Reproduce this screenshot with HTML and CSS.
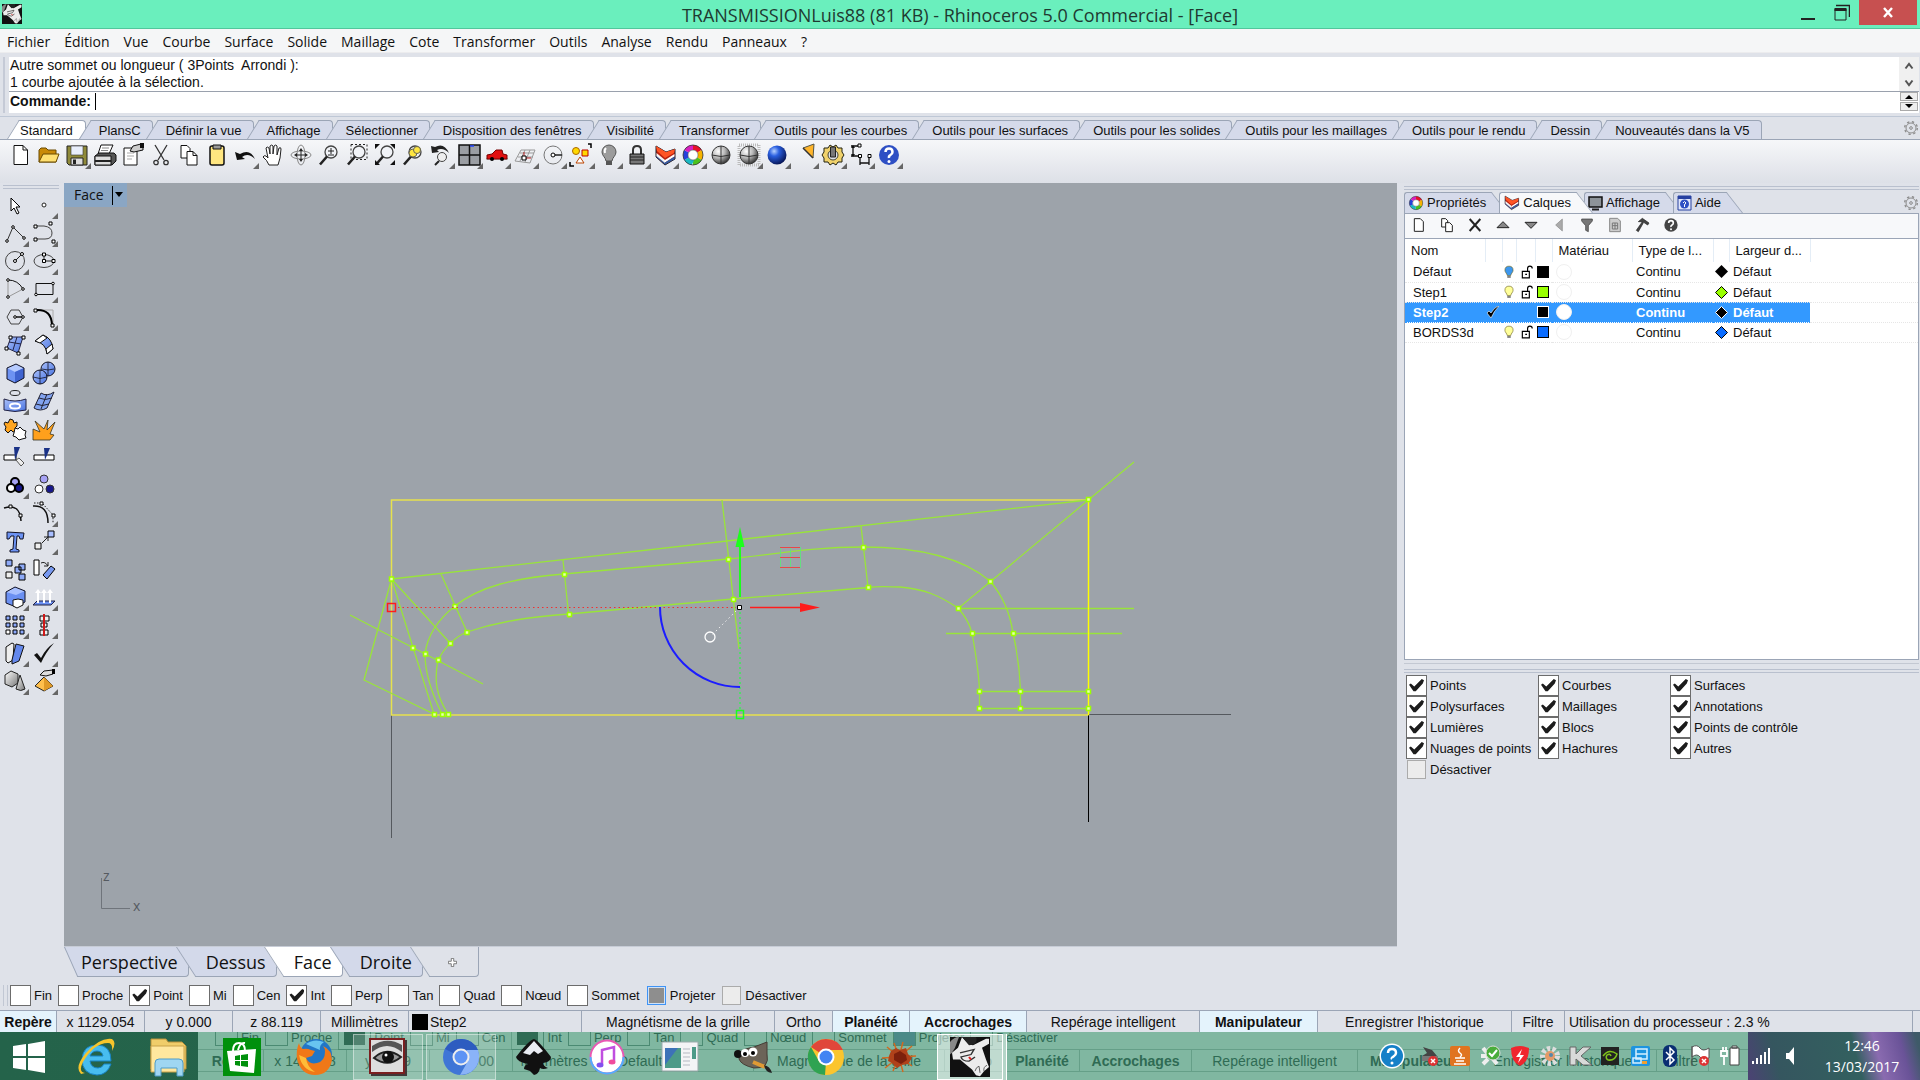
FILE: index.html
```html
<!DOCTYPE html>
<html lang="fr">
<head>
<meta charset="utf-8">
<title>TRANSMISSIONLuis88 (81 KB) - Rhinoceros 5.0 Commercial - [Face]</title>
<link rel="stylesheet" href="styles.css">
</head>
<body>
<svg class="defs" width="0" height="0" aria-hidden="true">
  <defs>
    <linearGradient id="blue" x1="0" y1="0" x2="1" y2="1"><stop offset="0" stop-color="#a9c0fb"/><stop offset="1" stop-color="#4a74e0"/></linearGradient>
    <linearGradient id="grey" x1="0" y1="0" x2="1" y2="1"><stop offset="0" stop-color="#fff"/><stop offset="1" stop-color="#777"/></linearGradient>
    <radialGradient id="ball" cx=".35" cy=".3" r=".75"><stop offset="0" stop-color="#fff"/><stop offset=".5" stop-color="#b5b5b5"/><stop offset="1" stop-color="#2c2c2c"/></radialGradient>
    <radialGradient id="blueball" cx=".35" cy=".3" r=".75"><stop offset="0" stop-color="#b8d2ff"/><stop offset=".35" stop-color="#2a5fe0"/><stop offset="1" stop-color="#04114f"/></radialGradient>
    <symbol id="doc" viewBox="0 0 24 24"><path d="M5 2.500h9l4.500 4.500v14.500H5z" fill="#fff" stroke="#111"/><path d="M14 2.500V7h4.500" fill="none" stroke="#111"/></symbol>
    <symbol id="copy" viewBox="0 0 24 24"><path d="M4 2.500h6l3 3V15H4z" fill="#fff" stroke="#111"/><path d="M10 8.500h6l4 4V22H10z" fill="#fff" stroke="#111"/><path d="M16 8.500v4h4" fill="none" stroke="#111"/></symbol>
    <symbol id="lens" viewBox="0 0 24 24"><circle cx="14" cy="9" r="6" fill="#f1f3f7" stroke="#444" stroke-width="1.300"/><path d="M10 13.500L3 21.500" stroke="#222" stroke-width="2.600"/></symbol>
    <symbol id="wheel" viewBox="0 0 24 24"><g fill="none" stroke-width="5" transform="rotate(-90 12 12)"><circle cx="12" cy="12" r="7.500" pathLength="6" stroke="#e8102a" stroke-dasharray="1 5"/><circle cx="12" cy="12" r="7.500" pathLength="6" stroke="#f6b400" stroke-dasharray="1 5" stroke-dashoffset="-1"/><circle cx="12" cy="12" r="7.500" pathLength="6" stroke="#4cc21c" stroke-dasharray="1 5" stroke-dashoffset="-2"/><circle cx="12" cy="12" r="7.500" pathLength="6" stroke="#19b9c4" stroke-dasharray="1 5" stroke-dashoffset="-3"/><circle cx="12" cy="12" r="7.500" pathLength="6" stroke="#2540dc" stroke-dasharray="1 5" stroke-dashoffset="-4"/><circle cx="12" cy="12" r="7.500" pathLength="6" stroke="#d81fc0" stroke-dasharray="1 5" stroke-dashoffset="-5"/></g><circle cx="12" cy="12" r="10" fill="none" stroke="#333" stroke-width=".8"/><circle cx="12" cy="12" r="5" fill="#fff" stroke="#555" stroke-width=".6"/></symbol>
    <symbol id="layers" viewBox="0 0 24 24"><path d="M3 3l10 6 9-3v10l-10 6-9-8z" fill="#b9220f" stroke="#1c2233"/><path d="M3 3l10 6 9-3-1 4-9 5L4 8z" fill="#ff5424"/><path d="M12 17l9.500-6v2.500L12 19.500z" fill="#fff"/><path d="M12 19.500l9.500-6v2.500L12 21.500 3.500 14v-2z" fill="#2f5fa8"/><path d="M3.500 10v3l8.500 7v-3z" fill="#f4f4f4"/></symbol>
    <symbol id="globe" viewBox="0 0 24 24"><circle cx="12" cy="12" r="9" fill="url(#ball)" stroke="#333"/><path d="M3 12q9 3 18 0M12 3v18" fill="none" stroke="#333"/></symbol>
    <symbol id="gear" viewBox="0 0 24 24"><circle cx="12" cy="12" r="7.500" fill="none" stroke="#8b8b8b" stroke-width="1.500"/><circle cx="12" cy="12" r="9.500" fill="none" stroke="#8b8b8b" stroke-width="2" stroke-dasharray="3.500 4"/><circle cx="12" cy="12" r="2" fill="none" stroke="#8b8b8b" stroke-width="1.500"/></symbol>
    <symbol id="bulb" viewBox="0 0 24 24"><path d="M12 2a7 7 0 0 0-7 7c0 4 3.500 5 4 9h6c.5-4 4-5 4-9a7 7 0 0 0-7-7z" stroke="#665c10"/><path d="M9 19h6v3H9z" fill="#777"/></symbol>
    <symbol id="unlock" viewBox="0 0 24 24"><path d="M4 11h12v11H4z" fill="#fff" stroke="#000" stroke-width="2"/><path d="M13 11V6q0-4 4-4t4 4M9 16h3" fill="none" stroke="#000" stroke-width="2"/></symbol>
    <symbol id="help" viewBox="0 0 24 24"><circle cx="12" cy="12" r="10"/><path d="M8.500 9q0-3.500 3.500-3.500T15.500 9q0 2-2 3T12 15" fill="none" stroke="#fff" stroke-width="2.500"/><circle cx="12" cy="18.500" r="1.500" fill="#fff"/></symbol>
    <symbol id="rhino" viewBox="0 0 40 48"><path d="M0 0h40v48H0z" fill="#111"/><path d="M0 6q4-6 9-6L5 13 2 19l-2 2z" fill="#888"/><path d="M12 0l7 9 4 1L36 2h3v6l-7 5 4 14 3 9-5 5-4 6-4-1-4-7-7-7-5-5-7 0-1-8 6-6z" fill="#ececec"/><path d="M12 0h14q2 5-2 9l-5 1z" fill="#222"/><path d="M10 19l14-4-3 6-10 3q1 5 8 5l6-5" fill="none" stroke="#333" stroke-width="1.500"/><path d="M25 41q1-5 4-6l1 8M34 41q-1-5 3-7" fill="none" stroke="#555"/><path d="M19 24l2 3" stroke="#e02020" stroke-width="2"/></symbol>
  </defs>
</svg>

<header class="titlebar">
  <svg class="app-icon" viewBox="0 0 40 48" preserveAspectRatio="none"><use href="#rhino"/></svg>
  <h1>TRANSMISSIONLuis88 (81 KB) - Rhinoceros 5.0 Commercial - [Face]</h1>
  <div class="window-buttons">
    <button class="win" aria-label="Réduire"><svg width="16" height="20" viewBox="0 0 16 20"><path d="M1 16h14v2H1z" fill="#222"/></svg></button>
    <button class="win" aria-label="Restaurer"><svg width="16" height="18" viewBox="0 0 16 18"><path d="M2 2.500h13.500V14" fill="none" stroke="#222" stroke-width="1.500"/><path d="M1 6h11v11H1z" fill="none" stroke="#222"/><path d="M.5 5h12v3H.5z" fill="#222"/></svg></button>
    <button class="win close" aria-label="Fermer"><svg width="12" height="12" viewBox="0 0 12 12"><path d="M2 1l8 9M10 1l-8 9" stroke="#fff" stroke-width="2.400"/></svg></button>
  </div>
</header>

<nav class="menubar">
  <button>Fichier</button><button>Édition</button><button>Vue</button><button>Courbe</button><button>Surface</button><button>Solide</button><button>Maillage</button><button>Cote</button><button>Transformer</button><button>Outils</button><button>Analyse</button><button>Rendu</button><button>Panneaux</button><button>?</button>
</nav>

<section class="console">
  <div class="history">
    <p>Autre sommet ou longueur ( 3Points&nbsp; Arrondi ):<br>1 courbe ajoutée à la sélection.</p>
    <div class="scroller"><svg width="10" height="8" viewBox="0 0 10 8"><path d="M1.500 6.500L5 2l3.500 4.500" fill="none" stroke="#555" stroke-width="2"/></svg><svg width="10" height="8" viewBox="0 0 10 8"><path d="M1.500 1.500L5 6l3.500-4.500" fill="none" stroke="#555" stroke-width="2"/></svg></div>
  </div>
  <div class="prompt">
    <label for="cmd">Commande:</label>
    <span class="caret"></span>
    <input id="cmd" type="text">
    <div class="spinner"><button aria-label="Précédent"><svg width="8" height="5"><path d="M0 5l4-4 4 4z"/></svg></button><button aria-label="Suivant"><svg width="8" height="5"><path d="M0 0h8L4 4z"/></svg></button></div>
  </div>
</section>

<div class="toolbar-tabs">
  <div class="tabs" role="tablist">
    <button class="tab on">Standard</button><button class="tab">PlansC</button><button class="tab">Définir la vue</button><button class="tab">Affichage</button><button class="tab">Sélectionner</button><button class="tab">Disposition des fenêtres</button><button class="tab">Visibilité</button><button class="tab">Transformer</button><button class="tab">Outils pour les courbes</button><button class="tab">Outils pour les surfaces</button><button class="tab">Outils pour les solides</button><button class="tab">Outils pour les maillages</button><button class="tab">Outils pour le rendu</button><button class="tab">Dessin</button><button class="tab">Nouveautés dans la V5</button>
  </div>
  <button class="gear" aria-label="Options"><svg width="16" height="16"><use href="#gear"/></svg></button>
</div>

<div class="toolbar">
  <button class="tool" aria-label="Nouveau"><svg viewBox="0 0 24 24"><use href="#doc"/></svg></button>
  <button class="tool" aria-label="Ouvrir"><svg viewBox="0 0 24 24"><path d="M2 7l2-2h5l2 2h8v12H2z" fill="#c98a08" stroke="#6b4a00"/><path d="M2 19l4-8h16l-3 8z" fill="#ffe071" stroke="#6b4a00"/></svg></button>
  <button class="tool fly" aria-label="Enregistrer"><svg viewBox="0 0 24 24"><path d="M2 3h20v19H4l-2-2z" fill="#8f8a3a" stroke="#222"/><path d="M6 3h12v9H6z" fill="#e8eefb" stroke="#333" stroke-width=".6"/><path d="M6 15h12v7H6z" fill="#ddd" stroke="#222"/><path d="M8 16.500h3V21H8z" fill="#222"/></svg></button>
  <button class="tool" aria-label="Imprimer"><svg viewBox="0 0 24 24"><path d="M8 2h12l-4 9H5z" fill="#fff" stroke="#111"/><path d="M9 5h7M8 7.500h7" stroke="#888"/><path d="M2 13l4-3h15l2 2v6l-4 4H2z" fill="#555" stroke="#111"/><path d="M2 13h16v9H2z" fill="#ddd" stroke="#111"/><path d="M2 17h16v2H2z" fill="#222"/></svg></button>
  <button class="tool" aria-label="Propriétés du document"><svg viewBox="0 0 24 24"><path d="M3 5h13v17H3z" fill="#fff" stroke="#111"/><path d="M6 10h7M6 13h7M6 16h5" stroke="#aaa"/><path d="M9 8l3-5 8-2 2 1v5l-9 2z" fill="#ccc" stroke="#111"/><path d="M19 0h4v5h-4z" fill="#111"/></svg></button>
  <button class="tool" aria-label="Couper"><svg viewBox="0 0 24 24"><path d="M6 2l9 15M18 2L9 17" stroke="#333" stroke-width="1.300"/><circle cx="7" cy="19.500" r="2.200" fill="none" stroke="#333" stroke-width="1.300"/><circle cx="17" cy="19.500" r="2.200" fill="none" stroke="#333" stroke-width="1.300"/></svg></button>
  <button class="tool" aria-label="Copier"><svg viewBox="0 0 24 24"><use href="#copy"/></svg></button>
  <button class="tool" aria-label="Coller"><svg viewBox="0 0 24 24"><rect x="5" y="3" width="14" height="19" rx="2" fill="#ffe680" stroke="#111" stroke-width="1.500"/><path d="M8 2h8v4H8z" fill="#999" stroke="#111"/></svg></button>
  <button class="tool fly" aria-label="Annuler"><svg viewBox="0 0 24 24"><path d="M2 9l2 8 8-1-3-2q6-5 13 2-5-11-15-5z" fill="#111"/></svg></button>
  <button class="tool" aria-label="Panoramique"><svg viewBox="0 0 24 24"><path d="M8 22q-2-5-6-8 1-2 3-1l2 2L5 5q1-2 3 0l1 6V3q2-2 3 0v8l1-8q2-2 3 0v9l2-7q2-1 2 1l-1 9-2 7z" fill="#fff" stroke="#222"/></svg></button>
  <button class="tool" aria-label="Rotation"><svg viewBox="0 0 24 24"><ellipse cx="12" cy="12" rx="10" ry="4" fill="none" stroke="#888"/><ellipse cx="12" cy="12" rx="4" ry="10" fill="none" stroke="#888"/><path d="M7 12h10M12 7v10" stroke="#222"/><path d="M10 8l2-3 2 3M10 16l2 3 2-3M8 10l-3 2 3 2M16 10l3 2-3 2" fill="#222"/></svg></button>
  <button class="tool" aria-label="Zoom dynamique"><svg viewBox="0 0 24 24"><use href="#lens"/><path d="M11 8h6M14 5v6M11 12h6" stroke="#222"/></svg></button>
  <button class="tool" aria-label="Zoom fenêtre"><svg viewBox="0 0 24 24"><use href="#lens"/><path d="M6 1.500h16v15H6z" fill="none" stroke="#222" stroke-dasharray="2 2"/></svg></button>
  <button class="tool" aria-label="Zoom étendu"><svg viewBox="0 0 24 24"><use href="#lens"/><path d="M2 6V1h5zM22 6V1h-5zM22 17v5h-5zM2 17v5h5z" fill="#111"/></svg></button>
  <button class="tool" aria-label="Zoom sélection"><svg viewBox="0 0 24 24"><use href="#lens"/><circle cx="12" cy="10" r="4" fill="#ffe640" stroke="#665"/><circle cx="16" cy="7" r="3.500" fill="#ffe640" stroke="#665"/></svg></button>
  <button class="tool fly" aria-label="Zoom précédent"><svg viewBox="0 0 24 24"><circle cx="13" cy="14" r="4.500" fill="#eee" stroke="#444"/><path d="M10 18l-4 4" stroke="#222" stroke-width="2"/><path d="M2 3l1 7 7-1-2-2q6-3 12 3Q15-1 6 4z" fill="#222"/></svg></button>
  <button class="tool fly" aria-label="Vues"><svg viewBox="0 0 24 24"><path d="M2 2h21v20H2z" fill="#9b9ea3" stroke="#111" stroke-width="1.500"/><path d="M12.500 2v20M2 12h21" stroke="#111" stroke-width="1.500"/><path d="M13 3h4" stroke="#24f" stroke-width="1.500"/></svg></button>
  <button class="tool fly" aria-label="Vue de droite"><svg viewBox="0 0 24 24"><path d="M1 16h22" stroke="#888"/><path d="M2 12l5-1 4-4h6l1 4 4 1v4H2z" fill="#e01010" stroke="#700"/><circle cx="7" cy="16" r="2"/><circle cx="17" cy="16" r="2"/></svg></button>
  <button class="tool fly" aria-label="Plan de construction"><svg viewBox="0 0 24 24"><path d="M2 18l6-11h14l-5 13zM5 14h15M7 10h14M7 18l5-11M12 19l5-12" fill="none" stroke="#999"/><path d="M11 15V9M11 15h7" stroke="#b22"/><path d="M9 13h4v4H9z" fill="#fff" stroke="#000"/></svg></button>
  <button class="tool fly" aria-label="Accrochage"><svg viewBox="0 0 24 24"><circle cx="12" cy="12" r="9" fill="none" stroke="#777"/><path d="M12 12h9" stroke="#222" stroke-width="1.500"/><circle cx="12" cy="12" r="2" fill="#fff" stroke="#000"/></svg></button>
  <button class="tool fly" aria-label="Sélection"><svg viewBox="0 0 24 24"><circle cx="7" cy="8" r="3.500" fill="#ffd800" stroke="#a60"/><path d="M13 7h6v6h-6z" fill="#ffd800" stroke="#b00"/><path d="M7 20l4-6 4 6z" fill="#fff" stroke="#b40"/><path d="M19 1h3v4M1 19v4h4" fill="none" stroke="#000" stroke-width="1.500"/></svg></button>
  <button class="tool fly" aria-label="Cacher"><svg viewBox="0 0 24 24"><path d="M12 2a7 7 0 0 0-7 7c0 4 3.500 5 4 9h6c.5-4 4-5 4-9a7 7 0 0 0-7-7z" fill="#9c9c9c" stroke="#555"/><path d="M9 5q-2 2-1 5" fill="none" stroke="#fff" stroke-width="2"/><path d="M9 18h6v4H9z" fill="#555"/></svg></button>
  <button class="tool fly" aria-label="Verrouiller"><svg viewBox="0 0 24 24"><path d="M8 11V7q0-4 4-4t4 4v4" fill="none" stroke="#333" stroke-width="2"/><path d="M5 11h14v10H5z" fill="#777" stroke="#111"/><path d="M5 14h14M5 17h14" stroke="#222"/></svg></button>
  <button class="tool fly" aria-label="Calques"><svg viewBox="0 0 24 24"><use href="#layers"/></svg></button>
  <button class="tool fly" aria-label="Propriétés"><svg viewBox="0 0 24 24"><use href="#wheel"/></svg></button>
  <button class="tool" aria-label="Ombrage"><svg viewBox="0 0 24 24"><use href="#globe"/></svg></button>
  <button class="tool fly" aria-label="Rendu en direct"><svg viewBox="0 0 24 24"><path d="M2 2h20v20H2z" fill="none" stroke="#bbb" stroke-width="3" stroke-dasharray="1 1"/><use href="#globe"/></svg></button>
  <button class="tool fly" aria-label="Rendu"><svg viewBox="0 0 24 24"><circle cx="12" cy="12" r="9.500" fill="url(#blueball)"/></svg></button>
  <button class="tool fly" aria-label="Lumières"><svg viewBox="0 0 24 24"><path d="M10 5l11-4-1 14z" fill="#ffb52b" stroke="#554"/><path d="M10 5l10 10" stroke="#333" stroke-width="1.500"/></svg></button>
  <button class="tool fly" aria-label="Options"><svg viewBox="0 0 24 24"><path d="M9 2l3 2 3-2 2 3 4 0 0 4 2 3-2 3v4h-4l-2 3-3-2-3 2-2-3H3v-4l-2-3 2-3V5h4z" fill="#f0d26c" stroke="#221"/><circle cx="12" cy="12" r="5" fill="#dfe2e9" stroke="#443"/><path d="M9.500 4h5v10h-5z" fill="#777" stroke="#222"/></svg></button>
  <button class="tool fly" aria-label="Cotes"><svg viewBox="0 0 24 24"><path d="M2 3h8M4 3v10M2 13h9M11 13v9M20 13v9M11 20h9" fill="none" stroke="#111" stroke-width="1.300"/><path d="M2 5l2-3 2 3M2 11l2 3 2-3" fill="#111"/><path d="M9 1h3v3H9zM9.500 11.500h3v3h-3zM19 11.500h3v3h-3z" fill="#fff" stroke="#000"/></svg></button>
  <button class="tool fly" aria-label="Aide"><svg viewBox="0 0 24 24"><use href="#help" fill="#2e4fc4"/></svg></button>
</div>

<main class="workspace">
  <aside class="dock">
    <div class="grip"></div>
    <div class="dock-grid">
      <button class="tool" aria-label="Sélectionner"><svg viewBox="0 0 24 24"><path d="M8 5v13l3-3 3 6 2-1-3-6h4z" fill="#fff" stroke="#000"/></svg></button>
      <button class="tool fly" aria-label="Point"><svg viewBox="0 0 24 24"><circle cx="12" cy="12" r="2" fill="#fff" stroke="#222"/></svg></button>
      <button class="tool fly" aria-label="Polyligne"><svg viewBox="0 0 24 24"><path d="M4 20L10 6l11 11" fill="none" stroke="#333"/><g fill="#fff" stroke="#000"><circle cx="4" cy="20" r="1.300"/><circle cx="10" cy="6" r="1.300"/><circle cx="21" cy="17" r="1.300"/></g></svg></button>
      <button class="tool fly" aria-label="Courbe"><svg viewBox="0 0 24 24"><path d="M4 5h8q8 1 8 7 0 6-7 6H4" fill="none" stroke="#444"/><path d="M2 4h3v3H2zM17 1h3v3h-3zM2 17h3v3H2zM20 19h3v3h-3z" fill="#fff" stroke="#000"/></svg></button>
      <button class="tool fly" aria-label="Cercle"><svg viewBox="0 0 24 24"><circle cx="12" cy="12" r="9.500" fill="none" stroke="#444"/><path d="M12 12l7-7" stroke="#222"/><g fill="#fff" stroke="#000"><circle cx="12" cy="12" r="1.500"/><circle cx="19" cy="5" r="1.500"/></g></svg></button>
      <button class="tool fly" aria-label="Ellipse"><svg viewBox="0 0 24 24"><ellipse cx="12" cy="12" rx="10" ry="6.500" fill="none" stroke="#444"/><path d="M12 12h9M12 12V5" stroke="#222"/><path d="M10.500 10.500h3v3h-3zM20 10.500h3v3h-3zM10.500 4h3v3h-3z" fill="#fff" stroke="#000"/></svg></button>
      <button class="tool fly" aria-label="Arc"><svg viewBox="0 0 24 24"><path d="M5 3v17l15-8" fill="none" stroke="#999"/><path d="M5 3q10 0 15 9" fill="none" stroke="#111"/><g fill="#fff" stroke="#000"><circle cx="5" cy="3" r="1.300"/><circle cx="5" cy="20" r="1.300"/><circle cx="20" cy="12" r="1.300"/></g></svg></button>
      <button class="tool fly" aria-label="Rectangle"><svg viewBox="0 0 24 24"><path d="M4 6.500h17v11H4z" fill="none" stroke="#111"/><g fill="#fff" stroke="#000"><circle cx="21" cy="6.500" r="1.300"/><circle cx="4" cy="17.500" r="1.300"/></g></svg></button>
      <button class="tool fly" aria-label="Polygone"><svg viewBox="0 0 24 24"><path d="M8 5h8l4 7-4 7H8l-4-7z" fill="none" stroke="#444"/><path d="M12 12h8" stroke="#111" stroke-width="1.500"/><g fill="#fff" stroke="#000"><circle cx="12" cy="12" r="1.300"/><circle cx="20" cy="12" r="1.300"/></g></svg></button>
      <button class="tool fly" aria-label="Congé"><svg viewBox="0 0 24 24"><path d="M4 5h17v16" fill="none" stroke="#aaa"/><path d="M4 5q16-1 16 16" fill="none" stroke="#000" stroke-width="2"/><path d="M2 4h3v3H2zM19 19h3v3h-3z" fill="#fff" stroke="#000"/></svg></button>
      <button class="tool fly" aria-label="Surface par points"><svg viewBox="0 0 24 24"><path d="M8 4h12l-5 16-11-5z" fill="url(#blue)" stroke="#224"/><path d="M14 4l-4 13M6 9l12 2" stroke="#224"/><path d="M6 3h3v3H6zM19 3h3v3h-3zM2 14h3v3H2zM14 19h3v3h-3z" fill="#fff" stroke="#000"/></svg></button>
      <button class="tool fly" aria-label="Surface"><svg viewBox="0 0 24 24"><path d="M3 8l8-6q9 3 10 14l-6 5Q14 10 3 8z" fill="url(#blue)" stroke="#111"/><path d="M3 8l8-6 4 3-7 5zM15 21l6-5-1-5-6 5z" fill="#fff" stroke="#111"/></svg></button>
      <button class="tool fly" aria-label="Boîte"><svg viewBox="0 0 24 24"><path d="M4 7l9-4 8 4v10l-9 5-8-4z" fill="#6d92f2"/><path d="M4 7l9-4 8 4-9 4z" fill="#b6cbff"/><path d="M12 11v11l9-5V7z" fill="#3f63cf"/><path d="M4 7l9-4 8 4v10l-9 5-8-4z" fill="none" stroke="#112"/></svg></button>
      <button class="tool fly" aria-label="Sphères"><svg viewBox="0 0 24 24"><circle cx="16" cy="8" r="7" fill="url(#blue)" stroke="#112"/><circle cx="8" cy="16" r="7" fill="url(#blue)" stroke="#112"/><path d="M1 16q7 3 14 0M8 9v14M10 8q6 2 12 0M16 1v14" fill="none" stroke="#112" stroke-width=".8"/></svg></button>
      <button class="tool fly" aria-label="Projeter"><svg viewBox="0 0 24 24"><ellipse cx="12" cy="4" rx="5" ry="2.500" fill="none" stroke="#222"/><path d="M1 10q11 4 22 0v11q-11 3-22 0z" fill="url(#blue)" stroke="#224"/><ellipse cx="12" cy="17" rx="5" ry="2.500" fill="none" stroke="#fff" stroke-width="2"/></svg></button>
      <button class="tool fly" aria-label="Maillage"><svg viewBox="0 0 24 24"><path d="M9 4q6 4 13-1l-7 16q-7 4-13 0z" fill="#82a3ef" stroke="#223"/><path d="M7 9q6 3 13 0M4 15q6 3 13 0M15 5L9 20" fill="none" stroke="#223"/></svg></button>
      <button class="tool" aria-label="Joindre"><svg viewBox="0 0 24 24"><path d="M2 5l3 1 2-4 3 1 1 3 3-1v4l-2 2 2 3-4 1-2-2-3 3-3-3 1-3-2-3z" fill="#ffa51f" stroke="#111"/><path d="M12 11l3 1 2-2 3 3 3 1-1 4 1 3-4 1-3 1-3-3-3-1 1-3z" fill="#fff" stroke="#111"/></svg></button>
      <button class="tool" aria-label="Décomposer"><svg viewBox="0 0 24 24"><path d="M1 23V12l7 3-5-11 9 8 4-9-1 10 8-8-5 12 4 1-4 5z" fill="#ffa01c" stroke="#332" stroke-width=".8"/></svg></button>
      <button class="tool" aria-label="Limiter"><svg viewBox="0 0 24 24"><path d="M1 10h12v5H1z" fill="#fff" stroke="#000"/><path d="M11 2h6l-5 13z" fill="#1a3287"/><path d="M13 15l3-2 5 5-3 3z" fill="#eee" stroke="#555"/></svg></button>
      <button class="tool" aria-label="Diviser"><svg viewBox="0 0 24 24"><path d="M2 10h20v5H2z" fill="#fff" stroke="#000"/><path d="M12 3h6l-5 12z" fill="#1a3287"/></svg></button>
      <button class="tool fly" aria-label="Grouper"><svg viewBox="0 0 24 24"><g stroke="#000" stroke-width="2"><circle cx="12" cy="9" r="4" fill="#a6a2f4"/><circle cx="8" cy="15" r="4" fill="#fff"/><circle cx="16" cy="15" r="4" fill="#17178a"/></g></svg></button>
      <button class="tool" aria-label="Dissocier"><svg viewBox="0 0 24 24"><g stroke="#333"><circle cx="12" cy="6" r="4" fill="#a6a2f4"/><circle cx="7" cy="16" r="4" fill="#fff"/><circle cx="18" cy="16" r="4" fill="#17178a"/></g></svg></button>
      <button class="tool" aria-label="Éditer les points"><svg viewBox="0 0 24 24"><path d="M1 7q16-5 17 13" fill="none" stroke="#111" stroke-width="1.500"/><path d="M6 4h3v3H6zM16 13h3v3h-3z" fill="#fff" stroke="#000"/></svg></button>
      <button class="tool fly" aria-label="Points de contrôle"><svg viewBox="0 0 24 24"><path d="M1 5q15-1 15 17" fill="none" stroke="#111" stroke-width="1.500"/><path d="M2 2h8l11 12v8" fill="none" stroke="#222" stroke-dasharray="1.500 1.500"/><path d="M8 1h3v3H8zM20 13h3v3h-3z" fill="#fff" stroke="#000"/></svg></button>
      <button class="tool" aria-label="Texte"><svg viewBox="0 0 24 24"><path d="M4 3l17 1-1 6h-3l-1-3-2 0-1 13 3 1v2H7v-2l3-1 1-13-3 0-2 3H4z" fill="#6d93f3" stroke="#112"/></svg></button>
      <button class="tool fly" aria-label="Déplacer"><svg viewBox="0 0 24 24"><path d="M10 14l6-6M12 8h4v4" fill="none" stroke="#222"/><path d="M3 14h6v6H3z" fill="#eee" stroke="#000"/><path d="M16 2h6v6h-6z" fill="#a8beff" stroke="#000"/></svg></button>
      <button class="tool" aria-label="Copier"><svg viewBox="0 0 24 24"><g stroke="#000"><path d="M3 3h6v6H3zM16 7h6v6h-6zM12 10h6v6h-6zM16 17h6v6h-6z" fill="#8eaaf8"/><path d="M3 15h6v6H3z" fill="#eee"/></g></svg></button>
      <button class="tool" aria-label="Rotation"><svg viewBox="0 0 24 24"><path d="M2 3h5v15H2z" fill="#fff" stroke="#000"/><path d="M9 6q4-2 7 3M16 5v4h-4" fill="none" stroke="#222"/><path d="M11 18l8-9 4 3-8 10z" fill="#7899f0" stroke="#000"/></svg></button>
      <button class="tool fly" aria-label="Booléen"><svg viewBox="0 0 24 24"><path d="M3 7l9-5 10 4v11l-9 5-10-4z" fill="#6b90f2"/><path d="M3 7l9-5 10 4-9 4z" fill="#a8c0ff"/><path d="M3 7l9-5 10 4v11l-9 5-10-4z" fill="none" stroke="#112"/><path d="M10 15l5-1 5 1v5l-6 3-4-2z" fill="#fff" stroke="#111"/></svg></button>
      <button class="tool fly" aria-label="Extruder"><svg viewBox="0 0 24 24"><path d="M1 20l4-4h18l-4 4z" fill="#6b90f2" stroke="#224"/><path d="M6 18V6M12 18V6M18 18V6" stroke="#fff" stroke-width="2"/><path d="M3 8l3-4 3 4zM9 8l3-4 3 4zM15 8l3-4 3 4z" fill="#fff"/></svg></button>
      <button class="tool fly" aria-label="Réseau"><svg viewBox="0 0 24 24"><path d="M3 3h4v4H3zM10 3h4v4h-4zM17 3h4v4h-4zM3 10h4v4H3zM10 10h4v4h-4zM17 10h4v4h-4zM10 17h4v4h-4zM17 17h4v4h-4z" fill="#8ca9fb" stroke="#000"/><path d="M3 17h4v4H3z" fill="#fff" stroke="#000"/></svg></button>
      <button class="tool fly" aria-label="Aligner"><svg viewBox="0 0 24 24"><path d="M8 3h9v5H8zM9 10h6v4H9zM8 17h8v5H8z" fill="#eee" stroke="#000"/><path d="M12 1v22" stroke="#d01818" stroke-width="2"/></svg></button>
      <button class="tool fly" aria-label="Torsion"><svg viewBox="0 0 24 24"><path d="M3 6l6-4 2 1-1 16-5 3-2-2z" fill="#eee" stroke="#111"/><path d="M13 3l8 2-5 15-7 3 0-4z" fill="#6488ec" stroke="#111"/></svg></button>
      <button class="tool fly" aria-label="Vérifier"><svg viewBox="0 0 24 24"><path d="M2 14l3-2 4 5q5-10 13-15Q14 11 9 22z" fill="#111"/></svg></button>
      <button class="tool fly" aria-label="Solides"><svg viewBox="0 0 24 24"><path d="M2 6l6-4 7 3v9l-6 4-7-3z" fill="url(#grey)" stroke="#222"/><path d="M17 6l5 14q-4 3-9 0z" fill="url(#grey)" stroke="#222"/></svg></button>
      <button class="tool fly" aria-label="Modifier"><svg viewBox="0 0 24 24"><path d="M3 17l9-9 9 9-9 5z" fill="#ffbf4c" stroke="#222"/><path d="M12 8v14l9-5z" fill="#e09a28"/><path d="M8 6l4-4 9-1v4l-7 2z" fill="#ddd" stroke="#111"/><path d="M20 0h3v5h-3z"/></svg></button>
    </div>
  </aside>

  <section class="center">
    <div class="viewport">
      <svg class="drawing" viewBox="64 183 1333 763" preserveAspectRatio="xMinYMin meet">
        <path d="M391.500 715V838M1088 714.500h143" stroke="#55595e" fill="none"/>
        <path d="M1088.500 715V822" stroke="#000"/>
        <path d="M1088.500 500H391.500V715H1088.500" fill="none" stroke="#e6e14e" stroke-width="1.500"/>
        <g fill="none" stroke="#99e43a" stroke-width="1.300">
          <path d="M391.500 579L1088 500M391.500 579L364 680 434 714zM391.500 579L450 643M350 615L483 684M441 574L467 632M563 560L569 618M722 500L739 649M861 526L868 587"/>
          <path d="M442 714C432 694 425 675 425 654C427 638 436 621 455 606C480 586 515 578 564 574L728 559C770 555 810 547 863 547C925 547 965 560 990 581C1003 596 1010 613 1013 633C1018 655 1020 675 1020.500 691V708"/>
          <path d="M448 714C436 695 434 680 438 660C445 647 455 637 467 632C500 621 530 617 569 614L733 599 868 587.500C880 586 890 587 900 587C925 589 940 596 958 608C966 617 970 625 972 633C976 655 979 675 979.500 691V708"/>
          <path d="M1134 462L958 608.500H1134M946 633.500H1122M979 691.500H1088M979 708.500H1088"/>
        </g>
        <path d="M1088.500 500V715" stroke="#ffff00" stroke-width="1.500"/>
        <path d="M389.500 577h4v4h-4zM411 646h4v4h-4zM423.500 652h4v4h-4zM436.500 658h4v4h-4zM448.500 641.500h4v4h-4zM453 604.500h4v4h-4zM465 630.500h4v4h-4zM432.500 712.500h4v4h-4zM440.500 712.500h4v4h-4zM446.500 712.500h4v4h-4zM562.500 572.500h4v4h-4zM567.500 612.500h4v4h-4zM726.500 557.500h4v4h-4zM731.500 597.500h4v4h-4zM861.500 545.500h4v4h-4zM866.500 585.500h4v4h-4zM988.500 579.500h4v4h-4zM956.500 606.500h4v4h-4zM970.500 631.500h4v4h-4zM1011.500 631.500h4v4h-4zM977.500 689.500h4v4h-4zM1018.500 689.500h4v4h-4zM1086.500 689.500h4v4h-4zM977.500 706.500h4v4h-4zM1018.500 706.500h4v4h-4zM1086.500 706.500h4v4h-4zM1086.500 497.500h4v4h-4z" fill="#e8ffb0" stroke="#9cff00" stroke-width="1.500"/>
        <path d="M398 607.500H736" stroke="#f03030" stroke-dasharray="1.500 3"/>
        <path d="M740 612V710" stroke="#3bec5a" stroke-width="1.500" stroke-dasharray="2 3"/>
        <path d="M736 611L711 636" stroke="#eee" stroke-dasharray="1.500 3"/>
        <circle cx="710" cy="637" r="5" fill="none" stroke="#fff" stroke-width="1.300"/>
        <path d="M660 607A80 80 0 0 0 740 687" fill="none" stroke="#1c1cff" stroke-width="2"/>
        <path d="M750 607.500H802" stroke="#ff1c1c" stroke-width="1.500"/><path d="M800 603l20 4.500-20 4.500z" fill="#ff1c1c"/>
        <path d="M740 597V547" stroke="#1cff1c" stroke-width="2"/><path d="M735.500 547h9L740 527z" fill="#1cff1c"/>
        <path d="M780.500 547v21M790.500 547v21M800.500 547v21" stroke="#66dd80"/><path d="M780 547.500h20M780 557.500h20M780 567.500h20" stroke="#e84848"/>
        <path d="M387.500 603.500h8v8h-8z" fill="none" stroke="#ff1c1c" stroke-width="1.500"/>
        <path d="M736.500 710.500h7v8h-7z" fill="none" stroke="#1cff1c" stroke-width="1.500"/>
        <path d="M737.500 605.500h4v4h-4z" fill="#fff" stroke="#000"/>
        <path d="M101.500 878v30.500H130" fill="none" stroke="#6f747b"/>
        <text x="103" y="881" class="axis">z</text><text x="133" y="911" class="axis">x</text>
      </svg>
      <button class="view-label">Face<span class="view-menu"><svg width="8" height="5"><path d="M0 0h8L4 5z"/></svg></span></button>
    </div>
    <div class="view-tabs">
      <button class="vtab">Perspective</button><button class="vtab">Dessus</button><button class="vtab on">Face</button><button class="vtab">Droite</button><button class="vtab add" aria-label="Ajouter"><svg width="9" height="9" viewBox="0 0 11 11"><path d="M4 .5h3V4h3.500v3H7v3.500H4V7H.5V4H4z" fill="#fff" stroke="#666"/></svg></button>
    </div>
  </section>

  <aside class="panels">
    <div class="grip"></div>
    <div class="panel-tabs">
      <button class="ptab"><svg width="16" height="16"><use href="#wheel"/></svg>Propriétés</button>
      <button class="ptab on"><svg width="17" height="17"><use href="#layers"/></svg>Calques</button>
      <button class="ptab"><svg width="15" height="16" viewBox="0 0 15 16"><path d="M1 2h13v10H1z" fill="#8d9399" stroke="#111" stroke-width="1.500"/><path d="M4 14.500h7" stroke="#222" stroke-width="2"/></svg>Affichage</button>
      <button class="ptab"><svg width="15" height="16" viewBox="0 0 15 16"><path d="M1 1h13v14H1z" fill="#dfe5fb" stroke="#2740a0"/><path d="M1 1h13v3H1z" fill="#2740a0"/><circle cx="7.500" cy="9" r="4.500" fill="#2e4fc4"/><path d="M6 8q1.500-3 3 0-1.500 1-1.500 2v2" fill="none" stroke="#fff"/></svg>Aide</button>
      <button class="gear" aria-label="Options"><svg width="16" height="16"><use href="#gear"/></svg></button>
    </div>
    <div class="layers">
      <div class="layer-tools">
        <button aria-label="Nouveau calque"><svg viewBox="0 0 24 24"><path d="M5 2.500h9l4.500 4.500v14.500H5z" fill="#fff" stroke="#222" stroke-width="1.500"/></svg></button>
        <button aria-label="Nouveau sous-calque"><svg viewBox="0 0 24 24"><g fill="#fff" stroke="#222" stroke-width="1.500"><path d="M4 2.500h6l3 3V15H4z"/><path d="M10 8.500h6l4 4V22H10z"/></g></svg></button>
        <button aria-label="Supprimer"><svg viewBox="0 0 24 24"><path d="M4 3l16 18M20 3L4 21" stroke="#222" stroke-width="3"/></svg></button>
        <button aria-label="Monter"><svg viewBox="0 0 24 24"><path d="M3 16l9-9 9 9z" fill="#888" stroke="#222" stroke-width="1.500"/></svg></button>
        <button aria-label="Descendre"><svg viewBox="0 0 24 24"><path d="M3 8l9 9 9-9z" fill="#888" stroke="#222" stroke-width="1.500"/></svg></button>
        <button aria-label="Remonter"><svg viewBox="0 0 24 24"><path d="M17 3v18l-10-9z" fill="#aaa" stroke="#888"/></svg></button>
        <button aria-label="Filtrer"><svg viewBox="0 0 24 24"><path d="M4 3h16v3l-6 7v9l-4-2v-7L4 6z" fill="#777" stroke="#333"/></svg></button>
        <button aria-label="Tableau"><svg viewBox="0 0 24 24"><path d="M4 2h12l4 4v16H4z" fill="#ccc" stroke="#888" stroke-width="1.500"/><path d="M8 9h8v9H8zM12 9v9M8 13h8" fill="none" stroke="#777" stroke-width="1.500"/></svg></button>
        <button aria-label="Outils"><svg viewBox="0 0 24 24"><path d="M5 7l6-5 10 7-2 3-6-4-8 14-3-2 9-13z" fill="#444" stroke="#222"/></svg></button>
        <button aria-label="Aide"><svg viewBox="0 0 24 24"><use href="#help" fill="#444"/></svg></button>
      </div>
      <table class="layer-table">
        <colgroup><col class="c-name"><col class="c-check"><col class="c-bulb"><col class="c-lock"><col class="c-color"><col class="c-mat"><col class="c-type"><col class="c-dia"><col class="c-width"><col></colgroup>
        <thead><tr><th>Nom</th><th></th><th></th><th></th><th></th><th>Matériau</th><th>Type de l...</th><th></th><th>Largeur d...</th><th class="rest"></th></tr></thead>
        <tbody>
          <tr><td>Défaut</td><td></td><td><svg width="14" height="14"><use href="#bulb" fill="#3d97ee"/></svg></td><td><svg width="14" height="14"><use href="#unlock"/></svg></td><td><i class="swatch black"></i></td><td><i class="disc"></i></td><td>Continu</td><td><svg width="13" height="13"><path d="M6.500 0l6.500 6.500-6.500 6.500L0 6.500z"/></svg></td><td>Défaut</td><td></td></tr>
          <tr><td>Step1</td><td></td><td><svg width="14" height="14"><use href="#bulb" fill="#ffff9a"/></svg></td><td><svg width="14" height="14"><use href="#unlock"/></svg></td><td><i class="swatch lime"></i></td><td><i class="disc"></i></td><td>Continu</td><td><svg width="13" height="13"><path d="M6.500 .5l6 6-6 6-6-6z" fill="#9f0" stroke="#000"/></svg></td><td>Défaut</td><td></td></tr>
          <tr class="sel"><td>Step2</td><td><svg width="12" height="12" viewBox="0 0 12 12"><path d="M0 7l2-2 2 2q3-5 7-7h1Q7 5 4 12z" fill="#000" stroke="#fff" stroke-width=".6"/></svg></td><td></td><td></td><td><i class="swatch black"></i></td><td><i class="disc"></i></td><td>Continu</td><td><svg width="13" height="13"><path d="M6.500 .5l6 6-6 6-6-6z" stroke="#fff"/></svg></td><td>Défaut</td><td class="rest"></td></tr>
          <tr><td>BORDS3d</td><td></td><td><svg width="14" height="14"><use href="#bulb" fill="#ffff9a"/></svg></td><td><svg width="14" height="14"><use href="#unlock"/></svg></td><td><i class="swatch azure"></i></td><td><i class="disc"></i></td><td>Continu</td><td><svg width="13" height="13"><path d="M6.500 .5l6 6-6 6-6-6z" fill="#0a6cff" stroke="#000"/></svg></td><td>Défaut</td><td></td></tr>
        </tbody>
      </table>
    </div>
    <div class="divider"></div>
    <div class="grip"></div>
    <div class="filters">
      <label><input type="checkbox" checked>Points</label><label><input type="checkbox" checked>Courbes</label><label><input type="checkbox" checked>Surfaces</label>
      <label><input type="checkbox" checked>Polysurfaces</label><label><input type="checkbox" checked>Maillages</label><label><input type="checkbox" checked>Annotations</label>
      <label><input type="checkbox" checked>Lumières</label><label><input type="checkbox" checked>Blocs</label><label><input type="checkbox" checked>Points de contrôle</label>
      <label><input type="checkbox" checked>Nuages de points</label><label><input type="checkbox" checked>Hachures</label><label><input type="checkbox" checked>Autres</label>
      <label><input type="checkbox" class="soft">Désactiver</label>
    </div>
  </aside>
</main>

<div class="osnap">
  <label><input type="checkbox">Fin</label><label><input type="checkbox">Proche</label><label><input type="checkbox" checked>Point</label><label><input type="checkbox">Mi</label><label><input type="checkbox">Cen</label><label><input type="checkbox" checked>Int</label><label><input type="checkbox">Perp</label><label><input type="checkbox">Tan</label><label><input type="checkbox">Quad</label><label><input type="checkbox">Nœud</label><label><input type="checkbox">Sommet</label><label><input type="checkbox" class="mixed">Projeter</label><label><input type="checkbox" class="soft">Désactiver</label>
</div>

<div class="statusbar">
  <button class="s-frame on">Repère</button><span class="s-coord">x 1129.054</span><span class="s-coord">y 0.000</span><span class="s-coord">z 88.119</span><span class="s-coord">Millimètres</span><button class="s-layer"><i></i>Step2</button><button class="s-grid">Magnétisme de la grille</button><button class="s-ortho">Ortho</button><button class="s-planar on">Planéité</button><button class="s-snap on">Accrochages</button><button class="s-track">Repérage intelligent</button><button class="s-gumball on">Manipulateur</button><button class="s-history">Enregistrer l'historique</button><button class="s-filter">Filtre</button><span class="s-cpu">Utilisation du processeur : 2.3 %</span>
</div>

<footer class="taskbar">
  <div class="glass" aria-hidden="true">
    <div class="glass-snaps"><span>Fin</span><span>Proche</span><span class="tick">Point</span><span>Mi</span><span>Cen</span><span class="tick">Int</span><span>Perp</span><span>Tan</span><span>Quad</span><span>Nœud</span><span>Sommet</span><span class="full">Projeter</span><span>Désactiver</span></div>
    <div class="glass-status"><b class="g-frame">Repère</b><span class="g-coord">x 149.308</span><span class="g-coord">y 0.559</span><span class="g-coord">z 0.000</span><span class="g-coord">Millimètres</span><span class="g-layer">Default</span><span class="g-grid">Magnétisme de la grille</span><span class="g-ortho">Ortho</span><b class="g-planar">Planéité</b><b class="g-snap">Accrochages</b><span class="g-track">Repérage intelligent</span><b class="g-gumball">Manipulateur</b><span class="g-history">Enregistrer l'historique</span><span class="g-filter">Filtre</span></div>
  </div>
  <div class="apps">
    <button class="app" aria-label="Démarrer"><svg width="34" height="34" viewBox="0 0 34 34"><path d="M1 6l13-2v12H1zM16 4l17-3v15H16zM1 18h13v12L1 28zM16 18h17v15l-17-3z" fill="#fff"/></svg></button>
    <button class="app" aria-label="Internet Explorer"><svg width="40" height="40" viewBox="0 0 40 40"><path d="M35 24H14q1 7 8 7 4 0 6-4h7q-4 11-14 11Q6 37 6 22 7 8 21 8q14 0 14 16zM14 19h13q-1-5-6-5t-7 5z" fill="#48bdf0" stroke="#1783c4"/><path d="M5 37Q-2 30 10 16 24 0 36 2q5 3 0 12 1-8-4-8Q18 6 7 25 2 35 9 36z" fill="#f6c52c"/></svg></button>
    <button class="app" aria-label="Explorateur"><svg width="40" height="40" viewBox="0 0 40 40"><path d="M2 2h15l2 3h14l4 4v23H2z" fill="#f0cd6a" stroke="#b9923a"/><path d="M2 9h33v26H2z" fill="#ffe79e" stroke="#c9a248"/><path d="M6 26q0-4 4-4h20q4 0 4 4v13h-6v-8H12v8H6z" fill="#9fd6f2" stroke="#4e9cc8"/></svg></button>
    <button class="app" aria-label="Windows Store"><svg width="38" height="38" viewBox="0 0 38 38"><path d="M0 0h38v38H0z" fill="#00900c"/><path d="M4 13l29-2-2 24-24-2z" fill="#fff"/><path d="M10 13q0-8 6-8t6 8M15 12q2-8 7-7" fill="none" stroke="#fff" stroke-width="2"/><path d="M12 18l5-1v5h-5zM18 17l7-1v6h-7zM12 23h5v5l-5-1zM18 23h7v6l-7-1z" fill="#00900c"/></svg></button>
    <button class="app" aria-label="Firefox"><svg width="38" height="38" viewBox="0 0 38 38"><circle cx="20" cy="17" r="16" fill="#2176c7"/><path d="M10 6q8-6 18-2-5 3-4 8z" fill="#68c4f0"/><path d="M3 5q1 5 4 6 4-1 8 1l4 1-3 5-6 2q3 7 11 5 8-2 8-11 0-4-2-6 9 4 9 14-3 15-17 15T1 21Q0 12 3 5z" fill="#f07818"/><path d="M3 17q3 15 16 17-8-5-9-14z" fill="#ffbd38"/></svg></button>
    <button class="app open" aria-label="Œil"><svg width="38" height="38" viewBox="0 0 38 38"><path d="M2 2h36v36H2z" fill="#403838"/><path d="M1 1h34v34H1z" fill="#ddd" stroke="#7a2020" stroke-width="2"/><path d="M3 14Q18 2 33 14v-7Q18-2 3 8z" fill="#555"/><path d="M5 20q12-12 27-1-13 11-27 1z" fill="#999" stroke="#222" stroke-width="2"/><circle cx="19" cy="19" r="6" fill="#111"/><circle cx="17" cy="17" r="1.500" fill="#fff"/></svg></button>
    <button class="app open" aria-label="Chromium"><svg width="38" height="38" viewBox="0 0 38 38"><circle cx="19" cy="19" r="18" fill="#3f75d6"/><path d="M19 19L3 11Q10 0 20 1q12 1 16 11H19z" fill="#2d5cc0"/><path d="M36 12q4 14-7 22-5 3-11 3l8-14-1-11z" fill="#8ab3f8"/><circle cx="19" cy="19" r="8.500" fill="#eee"/><circle cx="19" cy="19" r="6.500" fill="#5d93f5"/></svg></button>
    <button class="app" aria-label="Inkscape"><svg width="38" height="38" viewBox="0 0 38 38"><path d="M19 1q4 1 17 18 0 5-8 6 0 3 5 5-5 2-8 0-1 6-6 7l-4-4-6-2q0-4 4-5Q2 24 1 19 14 2 19 1z" fill="#111"/><path d="M19 3l9 10-5 3-4-3-4 4-7-2z" fill="#e9ecf2"/></svg></button>
    <button class="app" aria-label="iTunes"><svg width="36" height="36" viewBox="0 0 36 36"><circle cx="18" cy="18" r="16.500" fill="#fff" stroke="#e858b4" stroke-width="2"/><path d="M1.500 18a16.500 16.500 0 0 0 33 0" fill="none" stroke="#4fb0ff" stroke-width="2"/><path d="M13 25V11l12-3v14" fill="none" stroke="#c04ee0" stroke-width="2.500"/><ellipse cx="11" cy="26" rx="3.500" ry="2.500" fill="#8250ee"/><ellipse cx="23" cy="23" rx="3.500" ry="2.500" fill="#f04c9c"/></svg></button>
    <button class="app" aria-label="Fenêtre"><svg width="38" height="32" viewBox="0 0 38 32"><path d="M1 1h36v29H1z" fill="#f4f4f6" stroke="#9aa"/><path d="M4 7h16v20H4z" fill="#4c9a88"/><path d="M4 7h13L4 24z" fill="#3d72b8"/><path d="M22 8h7M22 12h7M22 16h7M22 20h7M22 24h7" stroke="#b5b9c2"/><path d="M31 6h4v12h-4z" fill="#4c9a88"/></svg></button>
    <button class="app" aria-label="GIMP"><svg width="40" height="36" viewBox="0 0 40 36"><path d="M7 13q6-4 14-5L34 3v12q3 15-13 14Q8 26 6 20z" fill="#6c6458" stroke="#443c34"/><circle cx="5" cy="15" r="4" fill="#111"/><circle cx="12" cy="14" r="4" fill="#fff"/><circle cx="20" cy="13" r="4.500" fill="#fff"/><circle cx="12" cy="15" r="2"/><circle cx="20" cy="14" r="2"/><path d="M20 23l12 5" stroke="#e09a34" stroke-width="4"/><path d="M31 26q6 1 8 8-7-1-8-8z" fill="#222"/></svg></button>
    <button class="app" aria-label="Chrome"><svg width="38" height="38" viewBox="0 0 38 38"><circle cx="19" cy="19" r="18" fill="#fbc52e"/><path d="M19 19L4 9Q10 1 19 1q12 0 17 11H19z" fill="#e0463a"/><path d="M4 9l9 16 6-1-1 13Q4 36 1 22 0 14 4 9z" fill="#2fa352"/><circle cx="19" cy="19" r="8.500" fill="#fff"/><circle cx="19" cy="19" r="6.500" fill="#4284f3"/></svg></button>
    <button class="app" aria-label="XnView"><svg width="36" height="32" viewBox="0 0 36 32"><g stroke="#d06a20" stroke-width="1.500"><path d="M18 16L13 2M18 16L22 1M18 16L31 5M18 16L35 15M18 16L31 25M18 16L22 31M18 16L12 30M18 16L4 27M18 16L1 17M18 16L6 6"/></g><path d="M10 10l5-3 4 2 6-2 2 6 4 4-4 6-6 1-5 3-5-5-4-2 1-5z" fill="#b0421a"/><path d="M13 13l6-3 6 4 1 5-6 4-7-4z" fill="#7c200c"/></svg></button>
    <button class="app active" aria-label="Rhinoceros"><svg width="40" height="40" viewBox="0 0 40 48" preserveAspectRatio="none"><use href="#rhino"/></svg></button>
  </div>
  <div class="tray">
    <svg class="tray-help" viewBox="0 0 26 26"><circle cx="13" cy="13" r="12.500" fill="#fff"/><circle cx="13" cy="13" r="11" fill="#1580c8"/><path d="M9 10q0-4 4-4t4 4q0 2-2.500 3.500T13 16" fill="none" stroke="#fff" stroke-width="2.500"/><circle cx="13" cy="20" r="1.500" fill="#fff"/></svg>
    <svg viewBox="0 0 24 24"><path d="M5 3l9 3 5 6H4L9 9z" fill="#444"/><path d="M4 12h16v5H4z" fill="#777"/><circle cx="15" cy="17" r="5" fill="#d33"/><path d="M13 15l4 4M17 15l-4 4" stroke="#fff" stroke-width="1.500"/></svg>
    <svg viewBox="0 0 24 24"><rect x="2" y="2" width="20" height="20" rx="2" fill="#e07420"/><path d="M12 4q-3 3 0 5t0 4M7 14h10M8 17h8M6 20h12" fill="none" stroke="#fff" stroke-width="1.500"/></svg>
    <svg viewBox="0 0 24 24"><path d="M5 4l5 6M5 20l5-5M19 20l-4-5M3 12h7" stroke="#eee" stroke-width="4"/><circle cx="15" cy="9" r="7" fill="#49ad3a" stroke="#ddd"/><path d="M11 9l3 3 5-6" fill="none" stroke="#fff" stroke-width="2"/></svg>
    <svg viewBox="0 0 24 24"><path d="M3 4q9-4 18 0 0 14-9 18Q3 18 3 4z" fill="#f0262e"/><path d="M14 5l-6 8h4l-2 6 6-8h-4z" fill="#fff"/></svg>
    <svg viewBox="0 0 24 24"><circle cx="12" cy="12" r="7" fill="none" stroke="#ddd" stroke-width="6" stroke-dasharray="3 2"/><circle cx="12" cy="12" r="5" fill="#e49a68"/><circle cx="13" cy="11" r="2" fill="#58a"/></svg>
    <svg viewBox="0 0 24 24"><path d="M2 3h6v7l7-7h8l-10 9 11 9h-9l-7-6v6H2z" fill="#d8dad9" stroke="#666"/></svg>
    <svg viewBox="0 0 24 24"><path d="M3 3h18v18H3z" fill="#222"/><path d="M5 12q6-8 14-2-2 7-9 6-3-2-1-5 3-2 4 1" fill="none" stroke="#7fc41c" stroke-width="1.500"/></svg>
    <svg viewBox="0 0 24 24"><rect x="3" y="2" width="19" height="20" rx="2" fill="#1d94e0"/><path d="M8 5h11v10H8zM8 10h11M5 14h8v5H5z" fill="none" stroke="#d6efff" stroke-width="1.500"/><path d="M14 17h5v3h-5z" fill="#f0a030"/></svg>
    <svg viewBox="0 0 24 24"><rect x="5" y="1" width="14" height="22" rx="6" fill="#0a2e72"/><path d="M8 8l8 8-4 4V4l4 4-8 8" fill="none" stroke="#fff" stroke-width="1.500"/></svg>
    <svg viewBox="0 0 24 24"><path d="M4 2v20M4 3q5-3 8 1t9 0v10q-6 3-9-1t-8 0z" fill="#fff" stroke="#555"/><circle cx="16" cy="17" r="5" fill="#d33"/><path d="M14 15l4 4M18 15l-4 4" stroke="#fff" stroke-width="1.500"/></svg>
    <svg viewBox="0 0 24 24"><path d="M12 4h9v17h-9zM14 2h5v2h-5z" fill="#fff" stroke="#444"/><path d="M3 7h6v5H3zM5 3v4M8 3v4M6 12v9" fill="none" stroke="#fff" stroke-width="1.800"/></svg>
    <svg viewBox="0 0 24 24"><path d="M5 20v-3M9 20v-6M13 20v-9M17 20V8M21 20V4" stroke="#fff" stroke-width="2"/></svg>
    <svg viewBox="0 0 24 24"><path d="M8 9h3l5-6v18l-5-6H8z" fill="#fff"/></svg>
  </div>
  <div class="clock"><time>12:46</time><span>13/03/2017</span></div>
</footer>
</body>
</html>
```
FILE: styles.css
```css
* { box-sizing: border-box; }
body {
  margin: 0;
  min-height: 100vh;
  display: flex;
  flex-direction: column;
  background: #dfe2e9;
  color: #111;
  font: 13px/16px "Liberation Sans", Arial, sans-serif;
  overflow-x: hidden;
}
button { margin: 0; padding: 0; border: 0; background: none; color: inherit; font: inherit; white-space: nowrap; }
button svg, .scroller svg { display: block; }
.defs { position: absolute; }

/* title bar */
.titlebar {
  display: grid;
  grid-template-columns: 160px 1fr 160px;
  height: 29px;
  background: #6aefbd;
  border-bottom: 1px solid #51c79c;
}
.app-icon { width: 20px; height: 20px; margin: 4px 2px; }
.titlebar h1 { margin: 0; text-align: center; white-space: nowrap; font: 18px/31px "Open Sans", "Noto Sans", sans-serif; color: #1f3a31; }
.window-buttons { display: flex; justify-content: flex-end; align-items: flex-start; padding-right: 3px; }
.win { width: 34px; height: 24px; display: flex; align-items: center; justify-content: center; }
.close { width: 58px; height: 25px; background: #c75050; }

/* menus */
.menubar {
  display: flex;
  gap: 14px;
  height: 24px;
  padding-left: 7px;
  background: #f5f6f7;
  border-bottom: 1px solid #ececee;
  font: 14px/26px "Open Sans", "Noto Sans", sans-serif;
}

/* command history and prompt */
.console {
  margin: 4px 1px 0 3px;
  padding-left: 4px;
  border-left: 2px solid #c5cad6;
  font-size: 14px;
  line-height: 17px;
}
.history { display: flex; justify-content: space-between; background: #fff; height: 35px; border-bottom: 1px solid #9aa1ad; }
.history p { margin: 0; padding-left: 1px; }
.scroller { width: 20px; background: #f0f0f0; display: flex; flex-direction: column; justify-content: space-around; align-items: center; }
.prompt { display: flex; align-items: center; height: 21px; padding-bottom: 2px; background: #fff; }
.prompt label { font-weight: bold; padding-left: 1px; }
.prompt input { flex: 1; border: 0; outline: 0; height: 19px; font: inherit; background: transparent; }
.caret { width: 1px; height: 17px; margin-left: 4px; background: #000; }
.spinner { display: flex; flex-direction: column; gap: 1px; padding-right: 1px; }
.spinner button { width: 18px; height: 9px; border: 1px solid #aaa; background: #eee; display: flex; align-items: center; justify-content: center; }

/* toolbar tabs */
.toolbar-tabs {
  display: flex;
  justify-content: space-between;
  align-items: flex-end;
  margin-top: 3px;
  height: 24px;
  padding: 0 1px 0 7px;
  border-top: 1px solid #bfc8d6;
  border-bottom: 1px solid #9ba5b6;
}
.tabs { display: flex; }
.tab { position: relative; isolation: isolate; height: 19px; line-height: 21px; margin-left: -7px; padding: 0 12px 0 20px; }
.tab:first-child { margin-left: 0; padding: 0 13px; }
.tab::before, .tab::after {
  content: "";
  position: absolute;
  z-index: -1;
  top: 0;
  bottom: 0;
  background: #d5daea;
  border-top: 1px solid #9ba5b6;
}
.tab::before { left: 0; right: 50%; border-left: 1px solid #9ba5b6; transform: skewX(-32deg); transform-origin: bottom; }
.tab::after { left: 50%; right: 0; border-right: 1px solid #9ba5b6; border-top-right-radius: 4px; }
.tab.on::before, .tab.on::after { background: #fff; }
.gear { align-self: center; }

/* icon buttons */
.toolbar {
  display: flex;
  height: 43px;
  padding: 1px 7px;
  background: linear-gradient(#f6f7f9, #dde0e7);
}
.tool { position: relative; width: 28px; height: 28px; padding: 2px; }
.tool svg { width: 24px; height: 24px; }
.tool.fly::after {
  content: "";
  position: absolute;
  right: 0;
  bottom: 0;
  border: 3px solid transparent;
  border-right-color: #666;
  border-bottom-color: #666;
}
.grip { height: 4px; border-top: 1px solid #b9c0ce; border-bottom: 1px solid #b9c0ce; flex: none; }

/* work area */
.workspace { flex: 1; display: flex; min-height: 0; }
.dock { flex: 0 0 64px; padding: 2px 5px 0 3px; }
.dock-grid { display: grid; grid-template-columns: 28px 28px; column-gap: 1px; margin: 2px 0 0 -2px; }
.center { flex: 1; min-width: 0; display: flex; flex-direction: column; }
.viewport { position: relative; flex: 1; min-height: 0; background: #9da3aa; overflow: hidden; }
.drawing { display: block; width: 100%; }
.axis { font: 14px "Open Sans", "Noto Sans", sans-serif; fill: #555a61; }
.view-label {
  position: absolute;
  top: 0;
  left: 0;
  height: 24px;
  display: flex;
  align-items: center;
  padding-left: 10px;
  background: #8aa6c4;
  font: 14px/22px "Open Sans", "Noto Sans", sans-serif;
}
.view-menu { height: 19px; margin-left: 8px; padding: 6px 4px 0 2px; border-left: 1px solid #000; }

.view-tabs { display: flex; height: 31px; font: 18px/30px "Open Sans", "Noto Sans", sans-serif; border-top: 1px solid #c7ccd6; }
.vtab { position: relative; isolation: isolate; height: 30px; margin-left: -13px; padding: 0 11px 0 30px; }
.vtab:first-child { margin-left: 0; padding-left: 17px; }
.vtab::before, .vtab::after { content: ""; position: absolute; z-index: -1; top: 0; bottom: 0; background: #d3d9ea; border-bottom: 1px solid #9ba5b6; }
.vtab::before { left: 0; right: 50%; border-left: 1px solid #9ba5b6; transform: skewX(33deg); transform-origin: top; }
.vtab:first-child::before { transform: skewX(24deg); }
.vtab::after { left: 50%; right: 0; border-right: 1px solid #9ba5b6; border-bottom-right-radius: 4px; }
.vtab.on::before, .vtab.on::after { background: #fff; }
.vtab.add { padding: 0 22px 0 38px; }
.vtab.add::before, .vtab.add::after { background: #dfe2e9; }

/* panels */
.panels { flex: 0 0 523px; padding: 3px 1px 0 7px; display: flex; flex-direction: column; }
.panel-tabs { display: flex; height: 22px; margin-top: 2px; border-bottom: 1px solid #9ba5b6; }
.ptab { position: relative; isolation: isolate; display: flex; align-items: center; gap: 3px; height: 21px; padding: 0 22px 0 4px; margin-right: -9px; }
.ptab:nth-child(1) { z-index: 1; }
.ptab.on { z-index: 2; }
.ptab::before, .ptab::after { content: ""; position: absolute; z-index: -1; top: 0; bottom: 0; background: #d5daea; border-top: 1px solid #9ba5b6; }
.ptab::before { left: 0; right: 50%; border-left: 1px solid #9ba5b6; border-top-left-radius: 3px; }
.ptab::after { left: 50%; right: 0; border-right: 1px solid #9ba5b6; transform: skewX(38deg); transform-origin: bottom; }
.ptab.on::before, .ptab.on::after { background: #f7f8fa; }
.panel-tabs .gear { margin-left: auto; }
.layers { height: 446px; background: #fff; border: 1px solid #9ba5b6; border-top: 0; }
.layer-tools { display: flex; height: 25px; border-bottom: 1px solid #9ba5b6; background: #f7f8fa; }
.layer-tools button { width: 28px; padding: 3px 6px 5px; }
.layer-tools svg { width: 16px; height: 16px; }
.layer-table { width: 100%; border-collapse: collapse; table-layout: fixed; }
.layer-table th { height: 23px; padding: 0 0 0 6px; text-align: left; font-weight: normal; border-right: 1px solid #e4edf6; white-space: nowrap; }
.layer-table th.rest { border: 0; }
.layer-table td { height: 20px; padding: 0 0 0 4px; border-bottom: 1px dotted #e6e6e6; white-space: nowrap; line-height: 15px; }
.layer-table td:first-child { padding-left: 8px; }
.layer-table td svg { display: block; }
.layer-table td:nth-child(2) { padding-left: 2px; }
.layer-table td:nth-child(3) { padding-left: 0; }
.layer-table td:nth-child(5), .layer-table td:nth-child(8) { padding-left: 2px; }
.c-name { width: 80px; } .c-check { width: 17px; } .c-bulb { width: 14px; } .c-lock { width: 19px; } .c-color { width: 17px; }
.c-mat { width: 80px; } .c-type { width: 81px; } .c-dia { width: 16px; } .c-width { width: 81px; }
.sel td { background: #3399ff; color: #fff; font-weight: bold; border-bottom-color: #3399ff; }
.sel td.rest { background: #fff; border-bottom-color: #e6e6e6; }
.swatch { display: block; width: 12px; height: 12px; border: 1px solid #000; }
.black { background: #000; }
.lime { background: #9f0; }
.azure { background: #0a6cff; }
.sel .swatch { border-color: #fff; }
.disc { display: block; width: 16px; height: 16px; border: 1px solid #f0f0f0; border-radius: 50%; }
.sel .disc { background: #fff; }
.divider { height: 1px; margin: 3px 0 5px; background: #c3c8d2; flex: none; }
.filters { display: grid; grid-template-columns: repeat(3, 132px); grid-auto-rows: 21px; margin: 2px 0 0 2px; }
.filters label, .osnap label { display: flex; align-items: center; gap: 3px; white-space: nowrap; }
input[type="checkbox"] {
  appearance: none;
  flex: none;
  width: 21px;
  height: 21px;
  margin: 0;
  border: 1px solid #6c6c6c;
  background: #fff;
}
input[type="checkbox"]:checked::before {
  content: "";
  display: block;
  width: 15px;
  height: 13px;
  margin: 3px 2px;
  background: #1c1c1c;
  clip-path: polygon(0 45%, 12% 35%, 35% 58%, 85% 0, 100% 10%, 92% 35%, 45% 95%, 30% 95%);
}
input.soft[type="checkbox"] { background: #ececec; border-color: #ababab; width: 19px; height: 19px; margin: 1px; }
input.mixed[type="checkbox"] { background: #8e8e8e; border: 1px solid #3f93f5; box-shadow: inset 0 0 0 1px #cfe2f8; width: 19px; height: 19px; margin: 1px; }

/* object snaps */
.osnap { display: flex; gap: 6px; height: 33px; padding: 8px 0 4px 3px; }
.osnap::before { content: ""; width: 3px; border: solid #c1c7d3; border-width: 0 1px; margin-right: -4px; }

/* status bar */
.statusbar { display: flex; height: 22px; border-top: 1px solid #9ba5b6; font-size: 14px; line-height: 22px; }
.statusbar > * { flex: none; text-align: center; border-right: 1px solid #9ba5b6; white-space: nowrap; }
.statusbar .on { background: #e4f3fc; font-weight: bold; }
.s-frame { width: 57px; }
.s-coord { width: 88px; }
.statusbar .s-layer { width: 173px; display: flex; align-items: center; gap: 2px; padding-left: 3px; text-align: left; }
.s-layer i { width: 16px; height: 16px; background: #000; }
.s-grid { width: 193px; }
.s-ortho { width: 58px; }
.s-planar { width: 77px; }
.s-snap { width: 117px; }
.s-track { width: 173px; }
.s-gumball { width: 118px; }
.s-history { width: 194px; }
.s-filter { width: 53px; }
.statusbar .s-cpu { flex: 1; margin-right: 7px; padding-left: 4px; text-align: left; }

/* taskbar */
.taskbar {
  position: relative;
  isolation: isolate;
  display: flex;
  align-items: center;
  height: 48px;
  overflow: hidden;
  background: linear-gradient(90deg, #24634a, #2a6b4f);
  color: #fff;
}
.taskbar::after {
  content: "";
  position: absolute;
  z-index: -1;
  inset: 0 0 0 auto;
  width: 172px;
  background: linear-gradient(75deg, #4c4274 0, #35565f 18%, #33605f 62%, #8a6bb0 74%, #6a5398 88%, #3e5a68 97%);
}
.glass { position: absolute; z-index: -1; inset: 0 172px 0 198px; overflow: hidden; background: #80b7a1; color: #2f6b54; }
.glass-snaps { display: flex; gap: 6px; height: 17px; padding-left: 17px; line-height: 12px; }
.glass-snaps span { display: flex; gap: 3px; white-space: nowrap; }
.glass-snaps span::before { content: ""; width: 21px; height: 13px; border: solid #4b8a72; border-width: 0 1px 1px; }
.glass-snaps .tick::before { background: #2f6b54 content-box; padding: 0 5px 4px; clip-path: polygon(0 0, 100% 0, 100% 100%, 0 100%); }
.glass-snaps .full::before { background: #4b8a88; }
.glass-status { display: flex; height: 23px; padding-left: 10px; border: solid #659f88; border-width: 1px 0; font-size: 14px; line-height: 22px; }
.glass-status > * { flex: none; text-align: center; border-right: 1px solid #659f88; white-space: nowrap; }
.g-frame { width: 56px; }
.g-coord { width: 83px; }
.g-layer { width: 158px; }
.glass-status .g-layer { text-align: left; padding-left: 22px; }
.g-grid { width: 191px; }
.g-ortho { width: 60px; }
.g-planar { width: 75px; }
.g-snap { width: 112px; }
.g-track { width: 166px; }
.g-gumball { width: 112px; }
.g-history { width: 187px; }
.g-filter { width: 52px; }
.apps { display: flex; flex: 1; min-width: 0; gap: 3px; }
.app { width: 70px; height: 46px; display: flex; align-items: center; justify-content: center; margin-top: 1px; flex: none; }
.app:first-child { width: 58px; }
.open { background: rgba(255, 255, 255, .16); border: 1px solid rgba(255, 255, 255, .45); }
.active { width: 66px; background: rgba(255, 255, 255, .5); border: 1px solid #fff; box-shadow: 3px 0 0 #b5d5c8, 4px 0 0 #fff; }
.tray { display: flex; gap: 6px; align-items: center; margin-right: 10px; }
.tray svg { width: 24px; height: 24px; }
.tray .tray-help { width: 26px; height: 26px; margin-right: 7px; }
.clock { width: 100px; display: flex; flex-direction: column; align-items: center; margin-right: 8px; font: 14px/21px "Open Sans", "Noto Sans", sans-serif; }
```
